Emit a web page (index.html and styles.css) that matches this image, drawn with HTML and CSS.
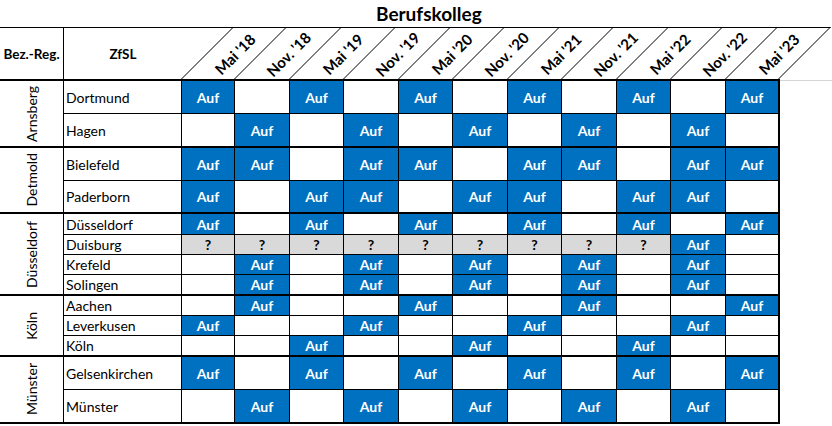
FILE: index.html
```html
<!DOCTYPE html>
<html lang="de">
<head>
<meta charset="utf-8">
<title>Berufskolleg</title>
<link rel="stylesheet" href="styles.css">
</head>
<body>
<div class="title">Berufskolleg</div>
<div class="sheet">
  <div class="h h1">Bez.-Reg.</div>
  <div class="h h2">ZfSL</div>
  <div class="hd"><span class="sl"></span><span class="hl">Mai '18</span></div>
  <div class="hd"><span class="sl"></span><span class="hl">Nov. '18</span></div>
  <div class="hd"><span class="sl"></span><span class="hl">Mai '19</span></div>
  <div class="hd"><span class="sl"></span><span class="hl">Nov. '19</span></div>
  <div class="hd"><span class="sl"></span><span class="hl">Mai '20</span></div>
  <div class="hd"><span class="sl"></span><span class="hl">Nov. '20</span></div>
  <div class="hd"><span class="sl"></span><span class="hl">Mai '21</span></div>
  <div class="hd"><span class="sl"></span><span class="hl">Nov. '21</span></div>
  <div class="hd"><span class="sl"></span><span class="hl">Mai '22</span></div>
  <div class="hd"><span class="sl"></span><span class="hl">Nov. '22</span></div>
  <div class="hd last"><span class="sl"></span><span class="hl">Mai '23</span></div>

  <div class="rg s2"><span class="vt">Arnsberg</span></div>
  <div class="n">Dortmund</div>
  <div class="a">Auf</div><div></div><div class="a">Auf</div><div></div><div class="a">Auf</div><div></div><div class="a">Auf</div><div></div><div class="a">Auf</div><div></div><div class="a lc">Auf</div>
  <div class="n gb">Hagen</div>
  <div class="gb"></div><div class="a gb">Auf</div><div class="gb"></div><div class="a gb">Auf</div><div class="gb"></div><div class="a gb">Auf</div><div class="gb"></div><div class="a gb">Auf</div><div class="gb"></div><div class="a gb">Auf</div><div class="gb lc"></div>

  <div class="rg s2"><span class="vt">Detmold</span></div>
  <div class="n">Bielefeld</div>
  <div class="a">Auf</div><div class="a">Auf</div><div></div><div class="a">Auf</div><div class="a">Auf</div><div></div><div class="a">Auf</div><div class="a">Auf</div><div></div><div class="a">Auf</div><div class="a lc">Auf</div>
  <div class="n gb">Paderborn</div>
  <div class="a gb">Auf</div><div class="gb"></div><div class="a gb">Auf</div><div class="a gb">Auf</div><div class="gb"></div><div class="a gb">Auf</div><div class="a gb">Auf</div><div class="gb"></div><div class="a gb">Auf</div><div class="a gb">Auf</div><div class="gb lc"></div>

  <div class="rg s4"><span class="vt">Düsseldorf</span></div>
  <div class="n">Düsseldorf</div>
  <div class="a">Auf</div><div></div><div class="a">Auf</div><div></div><div class="a">Auf</div><div></div><div class="a">Auf</div><div></div><div class="a">Auf</div><div></div><div class="a lc">Auf</div>
  <div class="n">Duisburg</div>
  <div class="q">?</div><div class="q">?</div><div class="q">?</div><div class="q">?</div><div class="q">?</div><div class="q">?</div><div class="q">?</div><div class="q">?</div><div class="q">?</div><div class="a">Auf</div><div class="lc"></div>
  <div class="n">Krefeld</div>
  <div></div><div class="a">Auf</div><div></div><div class="a">Auf</div><div></div><div class="a">Auf</div><div></div><div class="a">Auf</div><div></div><div class="a">Auf</div><div class="lc"></div>
  <div class="n gb">Solingen</div>
  <div class="gb"></div><div class="a gb">Auf</div><div class="gb"></div><div class="a gb">Auf</div><div class="gb"></div><div class="a gb">Auf</div><div class="gb"></div><div class="a gb">Auf</div><div class="gb"></div><div class="a gb">Auf</div><div class="gb lc"></div>

  <div class="rg s3"><span class="vt">Köln</span></div>
  <div class="n">Aachen</div>
  <div></div><div class="a">Auf</div><div></div><div></div><div class="a">Auf</div><div></div><div></div><div class="a">Auf</div><div></div><div></div><div class="a lc">Auf</div>
  <div class="n">Leverkusen</div>
  <div class="a">Auf</div><div></div><div></div><div class="a">Auf</div><div></div><div></div><div class="a">Auf</div><div></div><div></div><div class="a">Auf</div><div class="lc"></div>
  <div class="n gb">Köln</div>
  <div class="gb"></div><div class="gb"></div><div class="a gb">Auf</div><div class="gb"></div><div class="gb"></div><div class="a gb">Auf</div><div class="gb"></div><div class="gb"></div><div class="a gb">Auf</div><div class="gb"></div><div class="gb lc"></div>

  <div class="rg s2"><span class="vt">Münster</span></div>
  <div class="n">Gelsenkirchen</div>
  <div class="a">Auf</div><div></div><div class="a">Auf</div><div></div><div class="a">Auf</div><div></div><div class="a">Auf</div><div></div><div class="a">Auf</div><div></div><div class="a lc">Auf</div>
  <div class="n gb">Münster</div>
  <div class="gb"></div><div class="a gb">Auf</div><div class="gb"></div><div class="a gb">Auf</div><div class="gb"></div><div class="a gb">Auf</div><div class="gb"></div><div class="a gb">Auf</div><div class="gb"></div><div class="a gb">Auf</div><div class="gb lc"></div>
</div>
</body>
</html>
```

FILE: styles.css
```css
html, body {
  margin: 0;
  padding: 0;
  background: #fff;
}
body {
  font-family: Lato, "Liberation Sans", sans-serif;
  font-size: 14px;
  color: #000;
  overflow: hidden;
}
.title {
  height: 27px;
  line-height: 27px;
  padding-left: 376px;
  font-size: 19px;
  font-weight: 700;
}
.sheet {
  display: grid;
  grid-template-columns: 64px 118px 53px 55px 54px 55px 54px 55px 54px 55px 54px 55px 54px;
  grid-template-rows: 54px 33px 34px 33px 33px 21px 20px 20px 21px 20px 20px 21px 33px 34px;
  width: 780px;
}
.sheet > div {
  box-sizing: border-box;
  border-right: 1px solid #000;
  border-bottom: 1px solid #000;
  display: flex;
  align-items: center;
  justify-content: center;
  min-width: 0;
}
.sheet > .n {
  justify-content: flex-start;
  padding-left: 2px;
  white-space: nowrap;
}
.sheet > .a {
  background: #0070c0;
  color: #fff;
  font-weight: 700;
}
.sheet > .q {
  background: #d9d9d9;
  font-weight: 700;
}
.sheet > .gb {
  border-bottom-width: 2px;
}
.sheet > .lc {
  border-right-width: 2px;
}
.sheet > .rg {
  border-bottom-width: 2px;
}
.sheet > .s2 { grid-row: span 2; }
.sheet > .s3 { grid-row: span 3; }
.sheet > .s4 { grid-row: span 4; }
.vt {
  writing-mode: vertical-rl;
  transform: rotate(180deg);
  white-space: nowrap;
}
.sheet > .h {
  border-top: 1px solid #000;
  border-bottom-width: 2px;
  font-weight: 700;
  font-size: 13.5px;
}
.sheet > .h2 {
  border-right: none;
}
.sheet > .hd {
  position: relative;
  border-top: 1px solid #000;
  border-right: none;
  border-bottom-width: 2px;
  font-weight: 700;
}
.sl {
  position: absolute;
  left: -1px;
  top: -1px;
  bottom: 0;
  width: 100%;
  box-sizing: border-box;
  border-left: 1px solid #000;
  transform: skewX(-45deg);
  transform-origin: 0 100%;
}
.last .sl {
  border-top: 1px solid #000;
  border-right: 1px solid #000;
}
.sheet > .last::after {
  content: "";
  position: absolute;
  left: 100%;
  bottom: -2px;
  width: 60px;
  height: 1px;
  background: #d4d4d4;
}
.hl {
  font-size: 15px;
  transform: translateX(26px) rotate(-45deg);
  white-space: nowrap;
}
```
